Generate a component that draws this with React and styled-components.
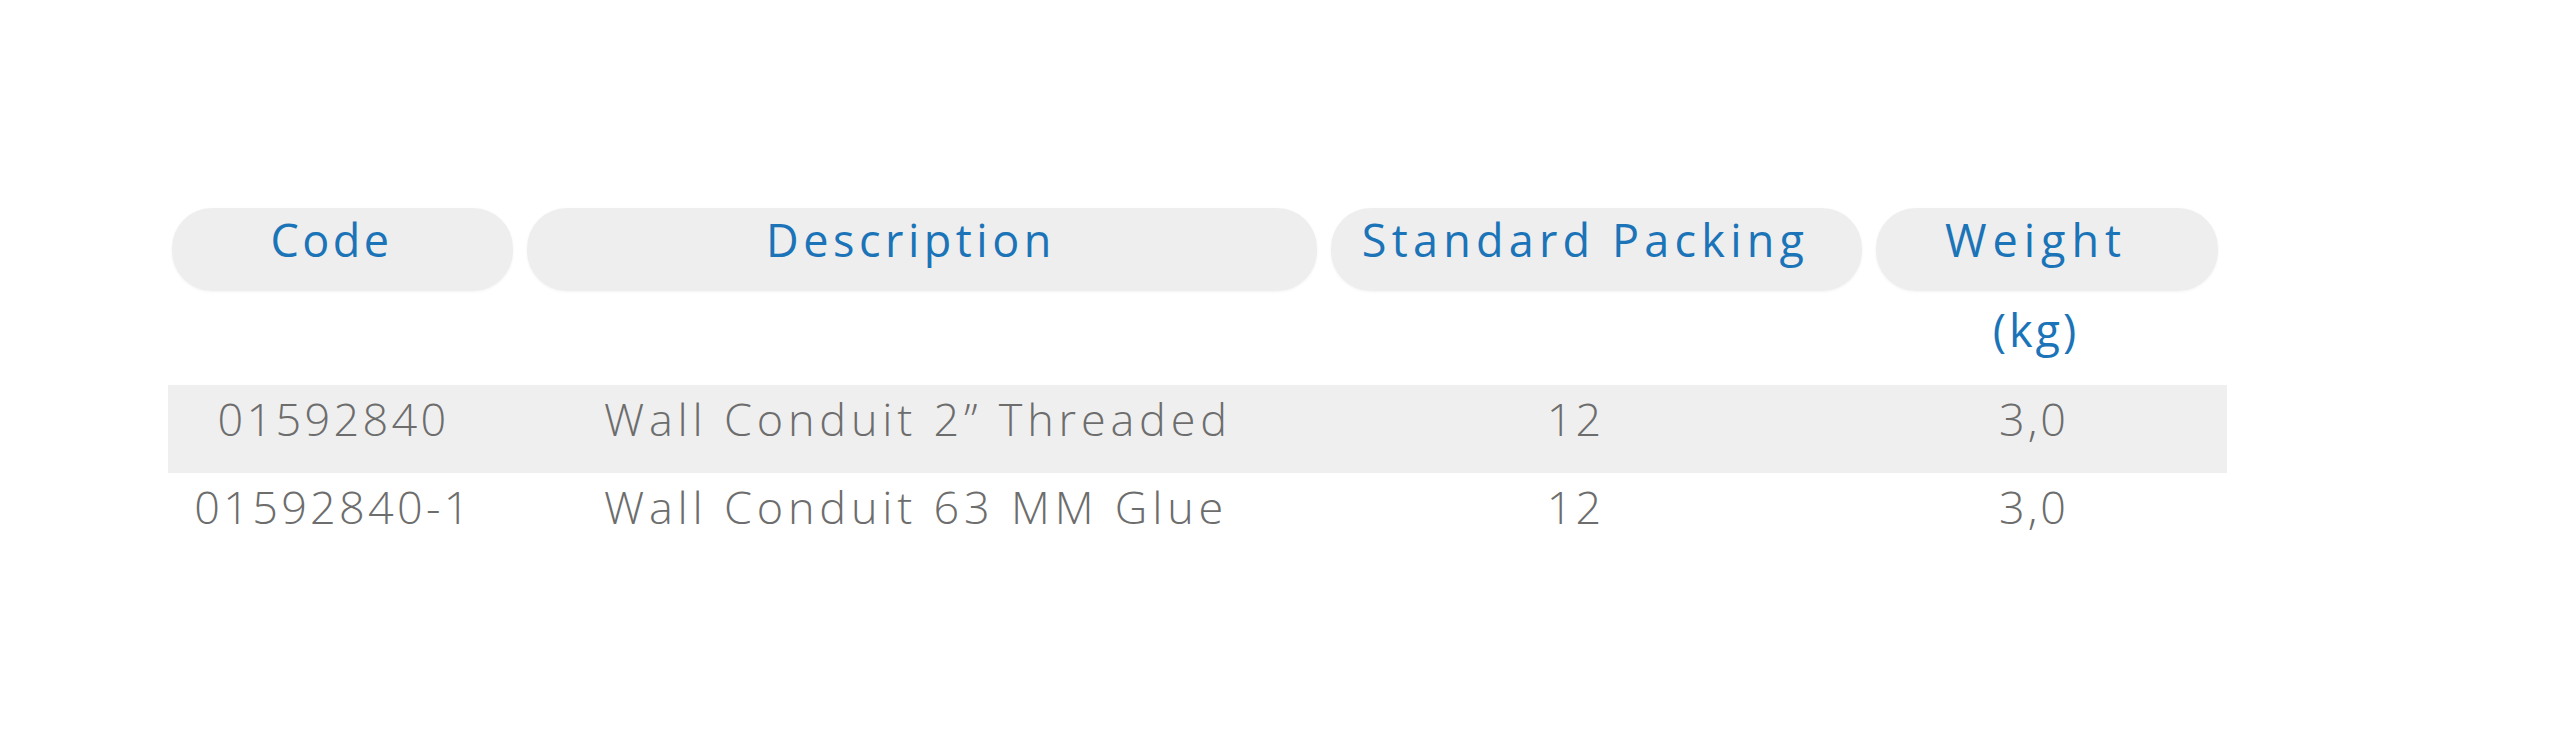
import React from "react";
import styled, { createGlobalStyle } from "styled-components";

const GlobalStyle = createGlobalStyle`
  html, body { margin: 0; padding: 0; background: #ffffff; }
  body { font-family: "Open Sans", "Noto Sans", sans-serif; }
`;

const Page = styled.div`
  width: 2560px;
  height: 730px;
  padding: 208px 0 0 168px;
  box-sizing: border-box;
`;

const Table = styled.div`
  width: 2059px;
  display: flex;
  flex-direction: column;
`;

const COLS = "341px 790px 531px 342px";

const HeadRow = styled.div`
  display: grid;
  grid-template-columns: ${COLS};
  column-gap: 14px;
  padding-left: 4px;
`;

const Pill = styled.div`
  background: #eeeeee;
  border-radius: 40px;
  box-shadow: 0 1px 3px rgba(0, 0, 0, 0.05);
  height: 83px;
  box-sizing: border-box;
  padding: 9px 22px 29px 0;
  text-align: center;
  color: #1b74b8;
  font-size: 45px;
  line-height: 45px;
  font-weight: 500;
  letter-spacing: ${(p) => p.$ls || "3px"};
  white-space: nowrap;
`;

const UnitRow = styled.div`
  display: grid;
  grid-template-columns: ${COLS};
  column-gap: 14px;
  padding: 16px 0 33px 4px;
`;

const Unit = styled.div`
  grid-column: 4;
  text-align: center;
  padding-right: 22px;
  color: #1b74b8;
  font-size: 45px;
  line-height: 45px;
  font-weight: 400;
  letter-spacing: 3px;
`;

const BodyRow = styled.div`
  display: grid;
  grid-template-columns: ${COLS};
  column-gap: 14px;
  padding: 11px 0 32px 4px;
  background: ${(p) => (p.$shaded ? "#efefef" : "transparent")};
`;

const Cell = styled.div`
  color: #6d6d6d;
  font-size: 45px;
  line-height: 45px;
  font-weight: 300;
  letter-spacing: ${(p) => p.$ls || "3px"};
  white-space: nowrap;
  text-align: ${(p) => p.$align || "center"};
  padding-left: ${(p) => p.$pl || "0px"};
  padding-right: ${(p) => p.$pr || "0px"};
`;

const rows = [
  { code: "01592840", desc: "Wall Conduit 2\u201D Threaded", pack: "12", weight: "3,0" },
  { code: "01592840-1", desc: "Wall Conduit 63 MM Glue", pack: "12", weight: "3,0" },
];

export default function App() {
  return (
    <>
      <GlobalStyle />
      <Page>
        <Table>
          <HeadRow>
            <Pill $ls="3.5px">Code</Pill>
            <Pill $ls="4.5px">Description</Pill>
            <Pill $ls="5.2px">Standard Packing</Pill>
            <Pill $ls="6px">Weight</Pill>
          </HeadRow>
          <UnitRow>
            <Unit>(kg)</Unit>
          </UnitRow>
          {rows.map((r, i) => (
            <BodyRow key={r.code} $shaded={i === 0}>
              <Cell $pr="18px" $ls="3.3px">{r.code}</Cell>
              <Cell $align="left" $pl="77px" $ls="4.8px">{r.desc}</Cell>
              <Cell $pr="42px" $ls="3px">{r.pack}</Cell>
              <Cell $pr="26px" $ls="3px">{r.weight}</Cell>
            </BodyRow>
          ))}
        </Table>
      </Page>
    </>
  );
}
